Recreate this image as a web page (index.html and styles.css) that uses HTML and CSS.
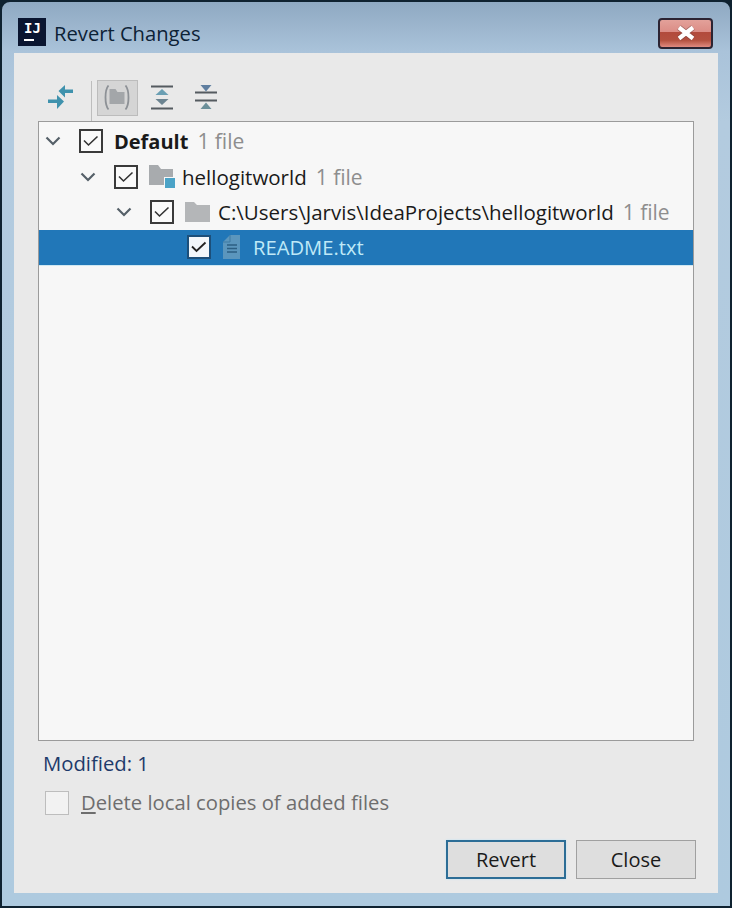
FILE: index.html
```html
<!DOCTYPE html>
<html lang="en">
<head>
<meta charset="utf-8">
<title>Revert Changes</title>
<link rel="stylesheet" href="styles.css">
</head>
<body>
<div class="window">
  <header class="titlebar">
    <div class="appicon"><span class="appicon-text">IJ</span><span class="appicon-bar"></span></div>
    <div class="title">Revert Changes</div>
    <div class="closebtn">
      <svg width="22" height="16" viewBox="0 0 22 16"><path d="M4 2.500L18 13.500M18 2.500L4 13.500" fill="none" stroke="#6b3a38" stroke-width="6" stroke-opacity=".5"/><path d="M4 2.500L18 13.500M18 2.500L4 13.500" fill="none" stroke="#fff" stroke-width="4.200"/></svg>
    </div>
  </header>
  <main class="panel">
    <div class="toolbar">
      <button class="tool tool-first">
        <svg width="30" height="30" viewBox="0 0 30 30"><path d="M12.500 8L19 2v4.500h8v3.500h-8v4.500z" fill="#3f92ad"/><path d="M2 16.500h9V12l7 6.500-7 7.500v-6H2z" fill="#3f92ad"/></svg>
      </button>
      <span class="sep"></span>
      <button class="tool tool-active">
        <svg width="30" height="26" viewBox="0 0 30 26"><path d="M5.500 0.500C3 3.500 2.500 8 2.500 12.500s.5 9 3 12M22.500 0.500c2.500 3 3 7.500 3 12s-.5 9-3 12" fill="none" stroke="#8d9196" stroke-width="1.800"/><path d="M6.500 4h6l2 3h7v12H6.500z" fill="#a3a6a9"/></svg>
      </button>
      <button class="tool tool-expand">
        <svg width="24" height="26" viewBox="0 0 24 26"><path d="M1 1.500h22M1 23.500h22" stroke="#555b60" stroke-width="2.200"/><path d="M12 4l6.500 6h-13z" fill="#6a9fb3"/><path d="M12 20l6.500-6h-13z" fill="#6b8390"/></svg>
      </button>
      <button class="tool tool-collapse">
        <svg width="24" height="26" viewBox="0 0 24 26"><path d="M1 7.500h22M1 15.500h22" stroke="#555b60" stroke-width="2.200"/><path d="M12 6.500L6.500 0h11z" fill="#5f7fa0"/><path d="M12 17.500L17.500 24h-11z" fill="#6b8f99"/></svg>
      </button>
    </div>
    <div class="tree">
      <div class="row">
        <svg class="chev" width="16" height="10" viewBox="0 0 16 10"><path d="M1.500 1.500L8 8l6.500-6.500" fill="none" stroke="#556068" stroke-width="2.200"/></svg>
        <span class="check"><svg width="20" height="20" viewBox="0 0 20 20"><path d="M3 9.500l4.500 4.500 9-8.500" fill="none" stroke="#333" stroke-width="1.600"/></svg></span>
        <span class="name name-strong">Default</span><span class="count">1 file</span>
      </div>
      <div class="row row-l1">
        <svg class="chev" width="16" height="10" viewBox="0 0 16 10"><path d="M1.500 1.500L8 8l6.500-6.500" fill="none" stroke="#556068" stroke-width="2.200"/></svg>
        <span class="check"><svg width="20" height="20" viewBox="0 0 20 20"><path d="M3 9.500l4.500 4.500 9-8.500" fill="none" stroke="#333" stroke-width="1.600"/></svg></span>
        <svg class="ficon" width="26" height="26" viewBox="0 0 26 26"><path d="M0 1h9l3 4h12v16H0z" fill="#a8abae"/><rect x="15" y="13" width="11" height="11" fill="#f7f7f7"/><rect x="16" y="14" width="10" height="10" fill="#4ba3c7"/></svg>
        <span class="name">hellogitworld</span><span class="count">1 file</span>
      </div>
      <div class="row row-l2">
        <svg class="chev" width="16" height="10" viewBox="0 0 16 10"><path d="M1.500 1.500L8 8l6.500-6.500" fill="none" stroke="#556068" stroke-width="2.200"/></svg>
        <span class="check"><svg width="20" height="20" viewBox="0 0 20 20"><path d="M3 9.500l4.500 4.500 9-8.500" fill="none" stroke="#333" stroke-width="1.600"/></svg></span>
        <svg class="ficon" width="26" height="22" viewBox="0 0 26 22"><path d="M0 1h9l3 3h13v17H0z" fill="#b4b6b8"/></svg>
        <span class="name">C:\Users\Jarvis\IdeaProjects\hellogitworld</span><span class="count">1 file</span>
      </div>
      <div class="row row-l3 row-selected">
        <span class="check check-sel"><svg width="20" height="20" viewBox="0 0 20 20"><path d="M3 9.500l4.500 4.500 9-8.500" fill="none" stroke="#222" stroke-width="1.800"/></svg></span>
        <svg class="ficon" width="20" height="26" viewBox="0 0 20 26"><path d="M1 8l7-7h10v24H1z" fill="#5b96bd"/><path d="M8 1v7H1" fill="none" stroke="#3f7ba3"/><path d="M5 11h10M5 14.500h10M5 18h10" stroke="#2c5f83" stroke-width="1.500"/></svg>
        <span class="name name-sel">README.txt</span>
      </div>
    </div>
    <div class="status">Modified: 1</div>
    <div class="option">
      <span class="check check-off"></span>
      <span class="option-label"><u>D</u>elete local copies of added files</span>
    </div>
    <div class="actions">
      <button class="btn btn-default">Revert</button>
      <button class="btn">Close</button>
    </div>
  </main>
</div>
</body>
</html>
```
FILE: styles.css
```css
* { box-sizing: border-box; }
html, body { margin: 0; padding: 0; height: 100%; background: #0f2230; }
body { font-family: "Open Sans", "Noto Sans", sans-serif; overflow: hidden; }
.window {
  width: 732px; height: 908px;
  border: 2px solid #0f2230; border-radius: 10px 10px 0 0;
  background: linear-gradient(180deg, #8fa9c2 0, #aac3da 50px, #b3cbdf 120px, #aecadf 100%);
  display: flex; flex-direction: column;
  padding: 0 12px 13px;
}
.titlebar { height: 51px; flex: none; display: flex; align-items: center; padding: 0 2px 0 4px; }
.appicon { width: 28px; height: 28px; background: #0a1530; display: flex; flex-direction: column; padding: 3px 0 0 6px; flex: none; margin-top: 8px; }
.appicon-text { color: #fff; font: bold 14px/15px "DejaVu Sans Mono", monospace; }
.appicon-bar { display: block; width: 10px; height: 2px; background: #fff; margin-top: 3px; }
.title { font-size: 20.200px; color: #0d2236; margin-left: 8px; margin-top: 10px; line-height: 28px; }
.closebtn {
  margin-left: auto; margin-top: 11px; margin-right: 3px;
  width: 55px; height: 31px; border: 2px solid #2c2433; border-radius: 4px;
  background: linear-gradient(180deg, #e3a19a 0, #db8c85 45%, #b24a3c 46%, #b4503f 75%, #e08a80 100%);
  display: flex; align-items: center; justify-content: center;
}
.panel {
  flex: 1; min-height: 0; background: #e9e9e9;
  display: flex; flex-direction: column;
  padding: 0 24px 14px 24px;
}
.toolbar { height: 68px; flex: none; display: flex; align-items: flex-end; padding: 0 0 5px 7px; }
.tool { border: 0; background: none; padding: 0; width: 30px; height: 36px; display: flex; align-items: center; justify-content: center; }
.tool-first { width: 32px; }
.sep { width: 1px; height: 40px; background: #bdbdbd; margin: 0 5px -5px 14px; align-self: flex-end; }
.tool-active { width: 41px; background: #d5d5d5; border: 1px solid #bcbcbc; }
.tool-expand { margin-left: 9px; }
.tool-collapse { margin-left: 14px; }
.tree { height: 620px; flex: none; border: 1px solid #9b9b9b; background: #f7f7f7; padding-top: 1.500px; }
.row { height: 35.500px; display: flex; align-items: center; padding-left: 6px; font-size: 20.500px; color: #1a1a1a; }
.row-l1 { padding-left: 41px; }
.row-l2 { padding-left: 77px; }
.row-l3 { padding-left: 148px; }
.row-selected { background: #2177b8; border-bottom: 1px solid #cfe8f2; }
.chev { flex: none; margin-right: 18px; }
.check { width: 24px; height: 24px; flex: none; border: 2px solid #3a3a3a; background: #fafafa; display: flex; align-items: center; justify-content: center; margin-right: 11px; }
.check-sel { background: #f2f7fb; border-color: #1c4f7a; }
.check-off { background: #f2f2f2; border: 1px solid #bdbdbd; margin: 0; }
.ficon { flex: none; margin-right: 7px; }
.name { white-space: nowrap; }
.name-strong { font-weight: 700; font-size: 20px; }
.name-sel { color: #bfe9f7; margin-left: 4px; font-size: 20.200px; }
.count { color: #8e8e8e; margin-left: 9px; white-space: nowrap; font-size: 21px; }
.status { color: #1e3a6b; font-size: 20.300px; line-height: 28px; margin: 8px 0 0 5px; }
.option { display: flex; align-items: center; margin: 11px 0 0 7px; }
.option-label { font-size: 20.250px; color: #6e6e6e; margin-left: 12px; line-height: 28px; padding-bottom: 1px; }
.actions { display: flex; justify-content: flex-end; gap: 10px; margin-top: auto; margin-right: -2px; }
.btn { width: 120px; height: 39px; font: 20px "Open Sans", "Noto Sans", sans-serif; color: #1a1a1a; background: #dedede; border: 1px solid #a0a0a0; padding: 0; }
.btn-default { border: 2.500px solid #2c6d96; box-shadow: 0 0 2px #bfe3f5; }
```
